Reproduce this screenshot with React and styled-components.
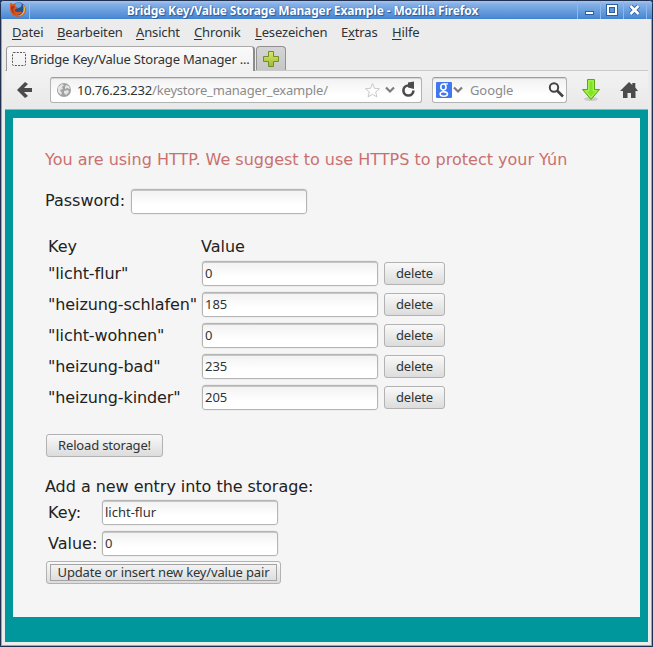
import React from 'react';
import styled, { createGlobalStyle } from 'styled-components';

const GlobalStyle = createGlobalStyle`
  * { box-sizing: border-box; }
  body { margin: 0; background: #1d3a66; overflow: hidden; }
  button, input { font: inherit; color: inherit; margin: 0; outline: none; }
`;

const ui = '"Noto Sans", "Open Sans", sans-serif';

const Window = styled.div`
  width: 653px;
  height: 647px;
  display: flex;
  flex-direction: column;
  border: 1px solid #20304e;
  border-radius: 4px 4px 0 0;
  background: #ececec;
  font: 13px/18px ${ui};
  color: #2e3436;
  overflow: hidden;
`;

const TitleBar = styled.header`
  height: 18px;
  flex: none;
  display: flex;
  align-items: center;
  background: linear-gradient(#a5c6ee 0, #86b0e6 3px, #6ca0df 9px, #4d8cd6 16px, #427fc9 18px);
`;

const AppIcon = styled.div`
  width: 29px;
  height: 18px;
  padding-left: 8px;
  border-right: 1px solid #94bbea;
  svg { display: block; }
`;

const Title = styled.h1`
  flex: 1;
  margin: 0;
  padding-right: 2px;
  text-align: center;
  font-size: 12px;
  font-weight: 700;
  line-height: 19px;
  letter-spacing: ${(p) => p.$track};
  white-space: nowrap;
  color: #fff;
  text-shadow: 0 0 1px #28569a, 1px 1px 1px #28569a;
`;

const WindowButton = styled.button`
  width: 23px;
  height: 18px;
  padding: 0;
  border: 0;
  border-left: 1px solid #8fb8ea;
  background: none;
  svg { display: block; }
`;

const TitleEnd = styled.div`
  width: 6px;
  height: 18px;
  border-left: 1px solid #8fb8ea;
`;

const Frame = styled.div`
  flex: 1;
  display: flex;
  flex-direction: column;
  border: 1px solid #79aaea;
  border-top: 0;
  padding: 0 3px;
  background: #ececec;
  min-height: 0;
`;

const MenuBar = styled.nav`
  height: 27px;
  flex: none;
  display: flex;
  padding: 4px 0 0 7px;
`;

const MenuItem = styled.span`
  width: ${(p) => p.$w}px;
  white-space: nowrap;
  letter-spacing: -0.15px;
  u { text-decoration-thickness: 1px; text-underline-offset: 2px; text-decoration-skip-ink: none; }
`;

const TabStrip = styled.div`
  height: 25px;
  flex: none;
  display: flex;
  align-items: flex-start;
  box-shadow: inset 0 -1px #c9c9c9;
  gap: 1px;
  padding-left: 1px;
`;

const Tab = styled.div`
  width: 249px;
  height: 25px;
  display: flex;
  align-items: center;
  gap: 4px;
  padding-left: 5px;
  border: 1px solid #999;
  border-right: 2px solid #8c8c8c;
  border-top-color: #aaa;
  border-bottom: 0;
  border-radius: 4px 4px 0 0;
  background: linear-gradient(#fafafa, #f0f0f0);
  white-space: nowrap;
  svg { flex: none; }
`;

const TabLabel = styled.span`
  letter-spacing: -0.21px;
`;

const NewTab = styled.button`
  width: 30px;
  height: 24px;
  padding: 2px 0 0 6px;
  border: 1px solid #919191;
  border-bottom: 0;
  border-radius: 4px 4px 0 0;
  background: linear-gradient(#d5d5d5, #c6c6c6);
  svg { display: block; }
`;

const NavBar = styled.div`
  height: 39px;
  flex: none;
  display: flex;
  align-items: flex-start;
  padding: 6px 0 0 10px;
  background: linear-gradient(#f2f2f2, #e9e9e9);
  border-bottom: 1px solid #aaa;
`;

const ToolButton = styled.button`
  width: ${(p) => p.$w}px;
  height: 26px;
  margin-left: ${(p) => p.$gap || 0}px;
  padding: 0;
  border: 0;
  background: none;
  svg { display: block; }
`;

const Field = styled.div`
  width: ${(p) => p.$w}px;
  height: 26px;
  margin-left: ${(p) => p.$gap}px;
  display: flex;
  align-items: center;
  padding: 0 ${(p) => p.$end}px 0 ${(p) => p.$start}px;
  border: 1px solid #b3b3b3;
  border-top-color: #9d9d9d;
  border-radius: 3px;
  background: linear-gradient(#f1f1f1, #fff 70%);
  box-shadow: inset 0 1px #d7d7d7;
  white-space: nowrap;
  svg { flex: none; display: block; }
`;

const Address = styled.span`
  flex: 1;
  margin-left: ${(p) => p.$gap || 5}px;
  letter-spacing: ${(p) => p.$track || '0'};
  color: #8b8b8b;
  b { font-weight: 400; color: #2e3436; }
`;

const Viewport = styled.main`
  height: 532px;
  flex: none;
  padding: 8px 8px 25px;
  background: #00979c;
`;

const Sheet = styled.section`
  height: 499px;
  padding: 32px;
  background: #f5f5f5;
  font: 16px/19px "DejaVu Sans", sans-serif;
  color: #222;
`;

const Notice = styled.p`
  margin: 0 0 19px;
  color: #c9706f;
  white-space: nowrap;
`;

const PasswordRow = styled.label`
  display: flex;
  align-items: center;
  height: 27px;
  gap: 5px;
  line-height: 17px;
  span { padding-bottom: 2px; }
`;

const Input = styled.input`
  width: 178px;
  height: 27px;
  padding: 0 3px 1px;
  border: 1px solid #ededed;
  border-radius: 4px;
  background: linear-gradient(#f1f1f1, #fff 65%) padding-box;
  box-shadow: inset 0 0 0 1px #b4b4b4, inset 0 2px #c9c7c6;
  font: 13px/18px ${ui};
  color: #2e3436;
`;

const Storage = styled.div`
  display: grid;
  grid-template-columns: 153px 178px auto;
  grid-template-rows: 23px;
  grid-auto-rows: 31px;
  align-items: center;
  justify-content: start;
  margin: 20px 0 0 3px;
  white-space: nowrap;
`;

const Heading = styled.span`
  align-self: end;
  line-height: 23px;
`;

const KeyName = styled.span`
  letter-spacing: -0.1px;
`;

const Button = styled.button`
  width: ${(p) => p.$w}px;
  height: 23px;
  margin-left: ${(p) => p.$gap || 0}px;
  padding: 0;
  border: 1px solid #b2b2b2;
  border-radius: 3px;
  background: linear-gradient(#f9f9f9, #dcdcdc);
  font: 13px/19px ${ui};
  letter-spacing: -0.16px;
  color: #2e3436;
  white-space: nowrap;
`;

const DefaultFace = styled.span`
  display: block;
  height: 17px;
  margin: 0 3px;
  border: 1px solid #a3a3a3;
  background: linear-gradient(#f2f2f2, #dedede);
  line-height: 15px;
`;

const Reload = styled.div`
  display: flex;
  padding: 21px 0 0 1px;
`;

const AddTitle = styled.p`
  margin: 20px 0 1px;
  letter-spacing: -0.04px;
`;

const AddGrid = styled.div`
  display: grid;
  grid-template-columns: 53px 178px;
  grid-auto-rows: 31px;
  align-items: center;
  padding-left: 3px;
  margin-bottom: 2px;
`;

const SubmitRow = styled.div`
  display: flex;
`;

const menus = [
  ['', 'D', 'atei', 45], ['', 'B', 'earbeiten', 79], ['', 'A', 'nsicht', 58],
  ['', 'C', 'hronik', 61], ['', 'L', 'esezeichen', 86], ['E', 'x', 'tras', 51], ['', 'H', 'ilfe', 40],
];

const entries = [
  ['licht-flur', '0'], ['heizung-schlafen', '185'], ['licht-wohnen', '0'],
  ['heizung-bad', '235'], ['heizung-kinder', '205'],
];

const FoxIcon = () => (
  <svg width="18" height="18" viewBox="0 0 18 18">
    <circle cx="9.5" cy="8" r="6.8" fill="#234f93" />
    <path d="M6 2.500q4-2.500 7 .5l-1 3-4 1.500-3-2z" fill="#67a5df" />
    <path d="M1.500 1.500L4 3.500 7 3 6 5l3 1.500-2 1.500-1.500 1q.5 2.500 4 2 2.500-1 3.500.3-2 2.700-5 2.200 5 1.500 6.500-2.500 1-4-1-8 3 2 3 5l.3-2q1.200 6-3.300 8.500-4.500 2.500-9 .3Q-.5 11 1.500 1.500z" fill="#dc561c" />
    <path d="M14 3q3.500 4.500 1.300 8.500-2 3.500-6.300 3.500 5-2 5.500-6 .3-3-.5-6z" fill="#f6b938" />
    <path d="M1.800 5.500L4 5l2 .5-1.800 2.500q-.2 4 3 5.500-5.500-1.500-5.400-8z" fill="#b3301c" />
  </svg>
);

const Chevron = () => (
  <svg width="12" height="12" viewBox="0 0 12 12"><path d="M2 3.500l4 4 4-4" fill="none" stroke="#7c7c7e" strokeWidth="2.2" /></svg>
);

export default function App() {
  return (
    <>
      <GlobalStyle />
      <Window>
        <TitleBar>
          <AppIcon><FoxIcon /></AppIcon>
          <Title $track="-0.14px">Bridge Key/Value Storage Manager Example - Mozilla Firefox</Title>
          <WindowButton aria-label="Minimize">
            <svg width="22" height="18"><rect x="7.5" y="10.5" width="8" height="3" fill="#fff" stroke="#2c5f9f" /></svg>
          </WindowButton>
          <WindowButton aria-label="Maximize">
            <svg width="22" height="18">
              <rect x="7" y="5" width="8" height="8" fill="none" stroke="#2c5f9f" strokeWidth="4" />
              <rect x="7" y="5" width="8" height="8" fill="#5b95db" stroke="#fff" strokeWidth="2" />
              <rect x="8.5" y="6.500" width="5" height="5" fill="none" stroke="#2c5f9f" />
            </svg>
          </WindowButton>
          <WindowButton aria-label="Close">
            <svg width="22" height="18">
              <path d="M6.500 5l8 8m0-8l-8 8" stroke="#2c5f9f" strokeWidth="4.4" />
              <path d="M6.500 5l8 8m0-8l-8 8" stroke="#fff" strokeWidth="2.6" />
            </svg>
          </WindowButton>
          <TitleEnd />
        </TitleBar>
        <Frame>
          <MenuBar>
            {menus.map(([a, b, c, w]) => <MenuItem key={b} $w={w}>{a}<u>{b}</u>{c}</MenuItem>)}
          </MenuBar>
          <TabStrip>
            <Tab>
              <svg width="14" height="14"><rect x=".5" y=".5" width="13" height="13" rx="1" fill="none" stroke="#555" strokeDasharray="2 1.25" /></svg>
              <TabLabel>Bridge Key/Value Storage Manager ...</TabLabel>
            </Tab>
            <NewTab aria-label="New tab">
              <svg width="17" height="17">
                <defs><linearGradient id="plus" x2="0" y2="1"><stop stopColor="#dbe56f" /><stop offset="1" stopColor="#9dbc2c" /></linearGradient></defs>
                <path d="M5.500 .5h5v5h5v5h-5v5h-5v-5h-5v-5h5z" fill="url(#plus)" stroke="#6b902b" />
              </svg>
            </NewTab>
          </TabStrip>
          <NavBar>
            <ToolButton $w={20} aria-label="Back">
              <svg width="20" height="26"><path d="M10 5l3 2-4 4h8v4H9l4 4-3 2-8-8z" fill="#4b4b4b" /></svg>
            </ToolButton>
            <Field $w={372} $gap={15} $start={5} $end={2}>
              <svg width="16" height="16" viewBox="0 0 16 16">
                <circle cx="8" cy="8" r="7" fill="#a1a1a1" />
                <path d="M2 5l4-3 2 1-2 2 1 2-3 1 2 3-1 2-3-3zM10 3l3 1 1 3-3-1-2 1 0-2zM8 9l4-1 1 2-3 3-2-2z" fill="#e4e4e4" />
              </svg>
              <Address $track="-0.19px"><b>10.76.23.232</b>/keystore_manager_example/</Address>
              <svg width="19" height="17" viewBox="0 0 19 17"><path d="M7.500 1.500l2 4.800 5 .4-3.800 3.300 1.200 5-4.400-2.700L3.100 15l1.200-5L.5 6.700l5-.4z" fill="#fdfdfd" stroke="#c9c9c9" /></svg>
              <Chevron />
              <svg width="23" height="18" viewBox="0 0 23 18"><path d="M17.400 9.500a5 5 0 1 1-5-5" fill="none" stroke="#4b4b4b" strokeWidth="2.600" /><path d="M12 1.500l6 -1v7.500l-6-1.500z" fill="#4b4b4b" /></svg>
            </Field>
            <Field $w={135} $gap={10} $start={3} $end={2}>
              <svg width="16" height="16" viewBox="0 0 16 16">
                <rect width="16" height="16" rx="1" fill="#4078ef" />
                <ellipse cx="7.4" cy="5" rx="2.6" ry="3" fill="none" stroke="#fff" strokeWidth="1.6" />
                <ellipse cx="7.8" cy="12" rx="3.7" ry="2.2" fill="none" stroke="#fff" strokeWidth="1.5" />
                <path d="M8 1.800h4M8.500 7.500q-3 1 0 2.200l2 1.300" fill="none" stroke="#fff" strokeWidth="1.3" />
              </svg>
              <Chevron />
              <Address $gap={6} $track="-0.1px">Google</Address>
              <svg width="16" height="16" viewBox="0 0 16 16"><circle cx="6" cy="5.500" r="4.200" fill="none" stroke="#444" strokeWidth="2" /><path d="M9 8.500l6 6" stroke="#444" strokeWidth="2.600" /></svg>
            </Field>
            <ToolButton $w={20} $gap={14} aria-label="Downloads">
              <svg width="20" height="26">
                <ellipse cx="10" cy="22" rx="7" ry="2" fill="#ccc" />
                <path d="M6.500 2.500h7v10h5L10 22.500l-8.500-10h5z" fill="#83e521" stroke="#58a915" />
                <path d="M7.800 3.800h4.400v10h3.300L10 20.400l-5.500-6.600h3.300z" fill="none" stroke="#b3f56f" />
              </svg>
            </ToolButton>
            <ToolButton $w={20} $gap={18} aria-label="Home">
              <svg width="20" height="26"><path d="M10 5l3.300 3V6h3v4.600L19 14h-2.500v7H12v-5H8.500v5H4v-7H1z" fill="#4b4b4b" /></svg>
            </ToolButton>
          </NavBar>
          <Viewport>
            <Sheet>
              <Notice>You are using HTTP. We suggest to use HTTPS to protect your Yún</Notice>
              <PasswordRow><span>Password:</span><Input type="password" /></PasswordRow>
              <Storage>
                <Heading>Key</Heading><Heading>Value</Heading><span />
                {entries.map(([key, value]) => (
                  <React.Fragment key={key}>
                    <KeyName>"{key}"</KeyName>
                    <Input defaultValue={value} />
                    <Button $w={61} $gap={5}>delete</Button>
                  </React.Fragment>
                ))}
              </Storage>
              <Reload><Button $w={117}>Reload storage!</Button></Reload>
              <AddTitle>Add a new entry into the storage:</AddTitle>
              <AddGrid>
                <span>Key:</span><Input defaultValue="licht-flur" />
                <span>Value:</span><Input defaultValue="0" />
              </AddGrid>
              <SubmitRow>
                <Button $w={235} $gap={1}><DefaultFace>Update or insert new key/value pair</DefaultFace></Button>
              </SubmitRow>
            </Sheet>
          </Viewport>
        </Frame>
      </Window>
    </>
  );
}
